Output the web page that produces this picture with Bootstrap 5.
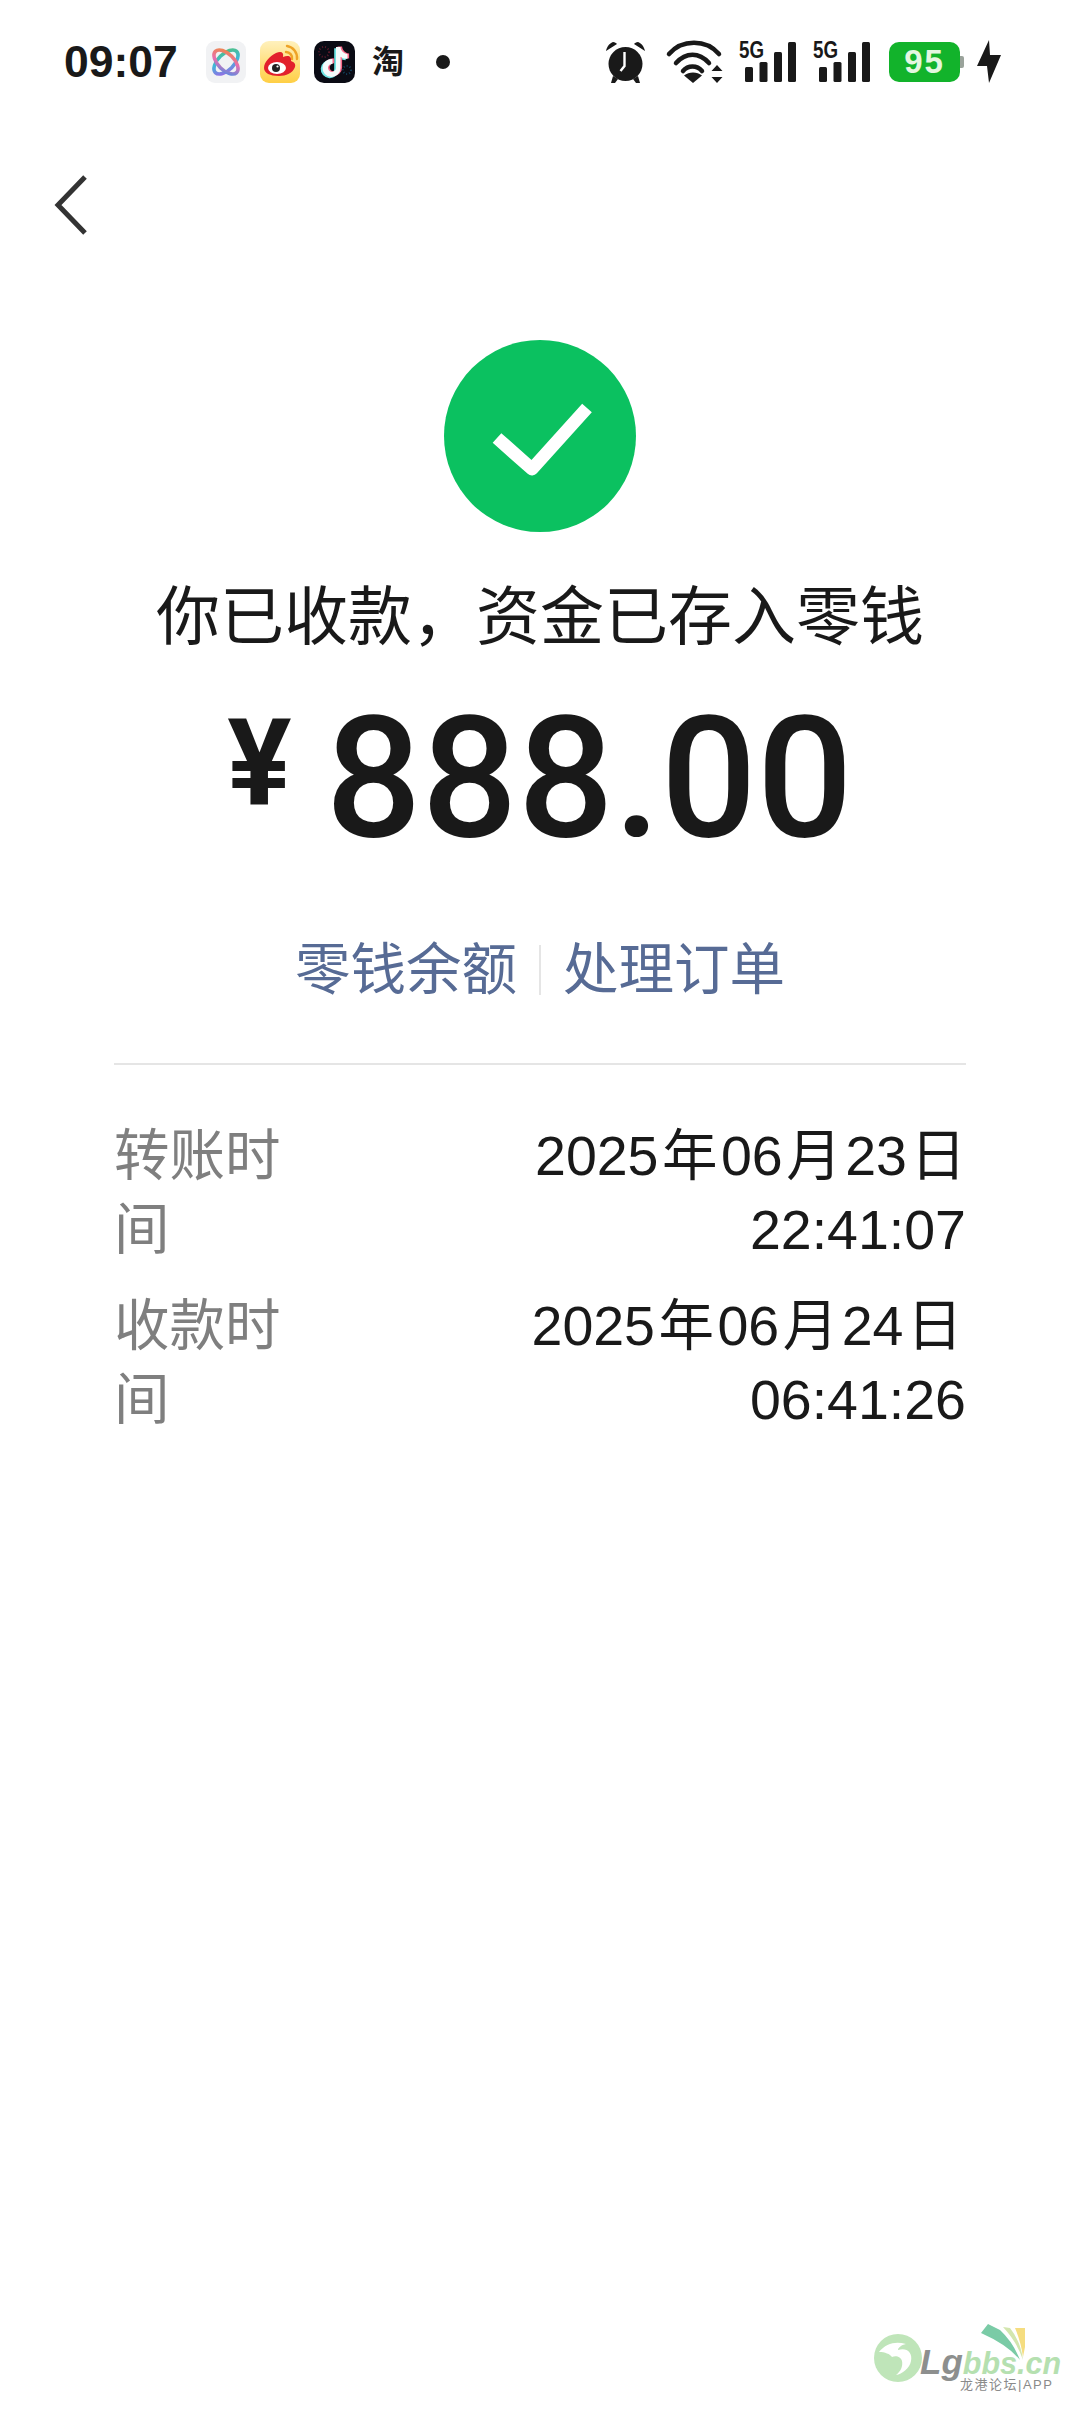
<!DOCTYPE html>
<html lang="zh-CN">
<head>
  <meta charset="UTF-8" />
  <title>转账详情</title>
  <meta name="viewport" content="width=device-width, initial-scale=1.0" />
  <link href="https://cdn.jsdelivr.net/npm/bootstrap@5.3.2/dist/css/bootstrap.min.css" rel="stylesheet" />
  <style>
    body {
      font-family: "Liberation Sans", "Noto Sans CJK SC", sans-serif;
      background-color: #fff;
      color: #191919;
      width: 1080px;
      height: 2412px;
      overflow: hidden;
    }

    .status-bar { margin-top: 40px; height: 44px; padding: 0 79px 0 64px; }
    .status-time { font-size: 44.5px; font-weight: 700; line-height: 44px; width: 142px; }
    .status-apps svg { display: block; }
    .status-app-gap { margin-left: 14px; }
    .status-tao { font-size: 32px; font-weight: 700; width: 32px; line-height: 40px; margin-left: 17px; }
    .status-dot { width: 14px; height: 14px; background: #191919; border-radius: 50%; margin-left: 32px; }
    .status-right svg { display: block; overflow: visible; }
    .gap-wifi { margin-left: 20px; }
    .gap-sig { margin-left: 16px; }
    .gap-sig2 { margin-left: 17px; }
    .battery-box {
      width: 71px; height: 40px; background: #12b32b; border-radius: 10px; margin-left: 19px;
      color: #e4f7e0; font-size: 33px; font-weight: 700; line-height: 40px; letter-spacing: 2px;
      text-align: center;
    }
    .battery-cap { width: 4px; height: 12px; background: #9aa39b; border-radius: 0 2px 2px 0; }
    .gap-bolt { margin-left: 13px; }

    .back-row { margin-top: 88px; padding-left: 53px; height: 66px; }
    .ok-icon { margin-top: 102px; }
    .done-title { margin-top: 43px; font-size: 64px; line-height: 84px; }
    .money { margin-top: 44px; height: 150px; font-family: Roboto, sans-serif; font-weight: 500; }
    .money-sign { font-size: 120px; line-height: 150px; font-weight: 700; margin-right: 34px; position: relative; top: -14px; }
    .money-num { font-size: 169px; line-height: 150px; }
    .link-row { margin-top: 80px; font-size: 55.5px; line-height: 74px; color: #576b95; gap: 22px; }
    .link-sep { width: 2px; height: 50px; background: #e5e5e5; }
    .split-line { margin: 56px 114px 0; border: 0; border-top: 2px solid #e5e5e5; opacity: 1; }
    .detail-box { margin: 54px 114px 0; font-size: 55.5px; line-height: 74px; }
    .detail-row { margin-bottom: 22px; }
    .detail-label { color: #7f7f7f; width: 170px; flex: none; }
    .detail-val { width: 460px; text-align: right; }
    .date-unit { margin: 0 3.5px; }
    .date-end { margin-right: 0; }

    .site-mark { position: absolute; left: 873px; top: 2320px; width: 190px; height: 72px; }
    .site-mark svg { position: absolute; left: 0; top: 0; }
    .site-name { position: absolute; left: 47px; top: 22px; font-size: 30.5px; line-height: 40px; font-style: italic; font-weight: 700; color: #b5e0b0; white-space: nowrap; }
    .site-name b { color: #8d8f8e; font-size: 35px; }
    .site-sub { position: absolute; left: 87px; top: 57px; font-size: 13px; line-height: 15px; color: #8a8a8a; letter-spacing: 1.5px; white-space: nowrap; }
  </style>
</head>
<body class="position-relative">
  <!-- status bar -->
  <div class="status-bar d-flex justify-content-between align-items-center">
    <div class="d-flex align-items-center">
      <div class="status-time">09:07</div>
      <div class="status-apps d-flex align-items-center">
        <svg width="40" height="42" viewBox="0 0 40 42">
          <defs>
            <linearGradient id="knotA" x1="0" y1="0" x2="1" y2="1"><stop offset="0" stop-color="#f08a3c"/><stop offset=".5" stop-color="#e76fb0"/><stop offset="1" stop-color="#4a8de8"/></linearGradient>
            <linearGradient id="knotB" x1="1" y1="0" x2="0" y2="1"><stop offset="0" stop-color="#4fc27a"/><stop offset=".5" stop-color="#3fb7d8"/><stop offset="1" stop-color="#a35fe8"/></linearGradient>
          </defs>
          <rect width="40" height="42" rx="9" fill="#f1f2f4"/>
          <ellipse cx="20" cy="21" rx="15" ry="8" fill="none" stroke="url(#knotB)" stroke-width="3.600" transform="rotate(-45 20 21)"/>
          <ellipse cx="20" cy="21" rx="15" ry="8" fill="none" stroke="url(#knotA)" stroke-width="3.600" transform="rotate(45 20 21)"/>
        </svg>
        <svg class="status-app-gap" width="40" height="42" viewBox="0 0 40 42">
          <defs><linearGradient id="wbBg" x1="0" y1="0" x2="0" y2="1"><stop offset="0" stop-color="#fff1bd"/><stop offset="1" stop-color="#ffcf45"/></linearGradient></defs>
          <rect width="40" height="42" rx="9" fill="url(#wbBg)"/>
          <path d="M4 27c0-6 6-12 12-15 5-2 8-1 7 4 5-2 9-1 8 4 3 1 5 3 4 6-2 6-9 9-16 9C10 35 4 32 4 27z" fill="#e2202c"/>
          <ellipse cx="17" cy="27" rx="9" ry="6" fill="#fff"/>
          <circle cx="16" cy="27" r="4" fill="#222"/>
          <circle cx="17.500" cy="25.500" r="1.100" fill="#fff"/>
          <path d="M26 11a6 6 0 0 1 6 7M27 5a12 12 0 0 1 10 13" fill="none" stroke="#eea326" stroke-width="2.400" stroke-linecap="round"/>
        </svg>
        <svg class="status-app-gap" width="41" height="42" viewBox="0 0 41 42">
          <rect width="41" height="42" rx="10" fill="#0a0b14"/>
          <circle cx="10" cy="11" r="5" fill="none" stroke="#5c1a2a" stroke-width="2" stroke-dasharray="1 2"/>
          <circle cx="33" cy="29" r="4" fill="none" stroke="#12405c" stroke-width="2" stroke-dasharray="1 2"/>
          <path d="M22 6h4.500c.5 4 3 6.500 7 7v5c-2.500 0-5-.8-7-2.200V27a9 9 0 1 1-8-9v5a4 4 0 1 0 3.500 4z" fill="#6fe5e4" transform="translate(-1.800 1.200)"/>
          <path d="M22 6h4.500c.5 4 3 6.500 7 7v5c-2.500 0-5-.8-7-2.200V27a9 9 0 1 1-8-9v5a4 4 0 1 0 3.500 4z" fill="#f8698a" transform="translate(1.600 -.6)"/>
          <path d="M22 6h4.500c.5 4 3 6.500 7 7v5c-2.500 0-5-.8-7-2.200V27a9 9 0 1 1-8-9v5a4 4 0 1 0 3.500 4z" fill="#f4fbfb"/>
        </svg>
        <div class="status-tao">淘</div>
        <div class="status-dot"></div>
      </div>
    </div>
    <div class="status-right d-flex align-items-center">
      <svg width="41" height="44" viewBox="0 0 41 44">
        <circle cx="20.500" cy="24" r="17" fill="#191919"/>
        <path d="M1 11C2 6 5 3 8 2c2 0 3 1 4 2zM40 11c-1-5-4-8-7-9-2 0-3 1-4 2z" fill="#191919"/>
        <path d="M8 36l-2 7h4l3-4zM33 36l2 7h-4l-3-4z" fill="#191919"/>
        <path d="M19.500 12v14l-4 5" fill="none" stroke="#fff" stroke-width="2.400"/>
      </svg>
      <svg class="gap-wifi" width="57" height="44" viewBox="0 0 57 44">
        <path d="M3 14C16 -1 40 -1 53 14" fill="none" stroke="#191919" stroke-width="4.500" stroke-linecap="round"/>
        <path d="M10 23C20 12 33 12 43 23" fill="none" stroke="#191919" stroke-width="4.500" stroke-linecap="round"/>
        <path d="M17 31C22 25 31 25 36 31" fill="none" stroke="#191919" stroke-width="4.500" stroke-linecap="round"/>
        <path d="M27 43l-9-7.500c5-4 13-4 18 0z" fill="#191919"/>
        <path d="M51 25l5.500 6h-11zM51 43l5.500-6h-11z" fill="#191919"/>
      </svg>
      <svg class="gap-sig" width="57" height="44" viewBox="0 0 57 44">
        <text x="0" y="18" font-family="Liberation Sans, sans-serif" font-size="23" font-weight="700" textLength="25" lengthAdjust="spacingAndGlyphs" fill="#191919">5G</text>
        <rect x="6" y="27" width="8" height="15" rx="1.500" fill="#191919"/>
        <rect x="20.500" y="22" width="8" height="20" rx="1.500" fill="#191919"/>
        <rect x="35" y="12" width="8" height="30" rx="1.500" fill="#191919"/>
        <rect x="49" y="2" width="8" height="40" rx="1.500" fill="#191919"/>
      </svg>
      <svg class="gap-sig2" width="57" height="44" viewBox="0 0 57 44">
        <text x="0" y="18" font-family="Liberation Sans, sans-serif" font-size="23" font-weight="700" textLength="25" lengthAdjust="spacingAndGlyphs" fill="#191919">5G</text>
        <rect x="6" y="27" width="8" height="15" rx="1.500" fill="#191919"/>
        <rect x="20.500" y="22" width="8" height="20" rx="1.500" fill="#191919"/>
        <rect x="35" y="12" width="8" height="30" rx="1.500" fill="#191919"/>
        <rect x="49" y="2" width="8" height="40" rx="1.500" fill="#191919"/>
      </svg>
      <div class="battery-box">95</div>
      <div class="battery-cap"></div>
      <svg class="gap-bolt" width="24" height="44" viewBox="0 0 24 44">
        <path d="M12 0L0 26h10l2 17L24 15H13z" fill="#191919"/>
      </svg>
    </div>
  </div>

  <!-- back -->
  <div class="back-row">
    <svg width="40" height="66" viewBox="0 0 40 66">
      <path d="M32 5L5 33l27 28" fill="none" stroke="#333" stroke-width="5"/>
    </svg>
  </div>

  <!-- result -->
  <div class="d-flex flex-column align-items-center text-center">
    <svg class="ok-icon" width="192" height="192" viewBox="0 0 192 192">
      <circle cx="96" cy="96" r="96" fill="#0bc160"/>
      <path d="M53 98l35 31 55-61" fill="none" stroke="#fff" stroke-width="13" stroke-linejoin="round"/>
    </svg>
    <div class="done-title">你已收款，资金已存入零钱</div>
    <div class="money d-flex align-items-center justify-content-center">
      <span class="money-sign">¥</span>
      <span class="money-num">888.00</span>
    </div>
    <div class="link-row d-flex align-items-center justify-content-center">
      <span>零钱余额</span>
      <span class="link-sep"></span>
      <span>处理订单</span>
    </div>
  </div>

  <hr class="split-line" />

  <div class="detail-box">
    <div class="detail-row d-flex justify-content-between">
      <div class="detail-label">转账时间</div>
      <div class="detail-val">2025<span class="date-unit">年</span>06<span class="date-unit">月</span>23<span class="date-unit date-end">日</span> 22:41:07</div>
    </div>
    <div class="detail-row d-flex justify-content-between">
      <div class="detail-label">收款时间</div>
      <div class="detail-val">2025<span class="date-unit">年</span>06<span class="date-unit">月</span>24<span class="date-unit">日</span> 06:41:26</div>
    </div>
  </div>

  <!-- watermark -->
  <div class="site-mark">
    <svg width="190" height="72" viewBox="0 0 190 72">
      <circle cx="25" cy="38" r="24" fill="#bfe5b9"/>
      <path d="M6 32c7-9 17-11 27-8-5 1-8 4-8 6 8-3 15 2 13 11-1 7-9 13-15 14 5-4 7-9 6-14-1-4-6-6-10-4-2-3-7-5-13-5z" fill="#fff"/>
      <path d="M108 13l7-9 12 6q13 12 20 30q-12-15-39-27z" fill="#7acba6"/>
      <path d="M130 7l7 1q11 14 13 32q-6-18-20-33z" fill="#d3e6ae"/>
      <path d="M142 8h10v19l-2 10q-2-15-8-29z" fill="#f5dd80"/>
    </svg>
    <div class="site-name"><b>Lg</b>bbs.cn</div>
    <div class="site-sub">龙港论坛|APP</div>
  </div>

  <script src="https://cdn.jsdelivr.net/npm/bootstrap@5.3.2/dist/js/bootstrap.bundle.min.js"></script>
</body>
</html>
